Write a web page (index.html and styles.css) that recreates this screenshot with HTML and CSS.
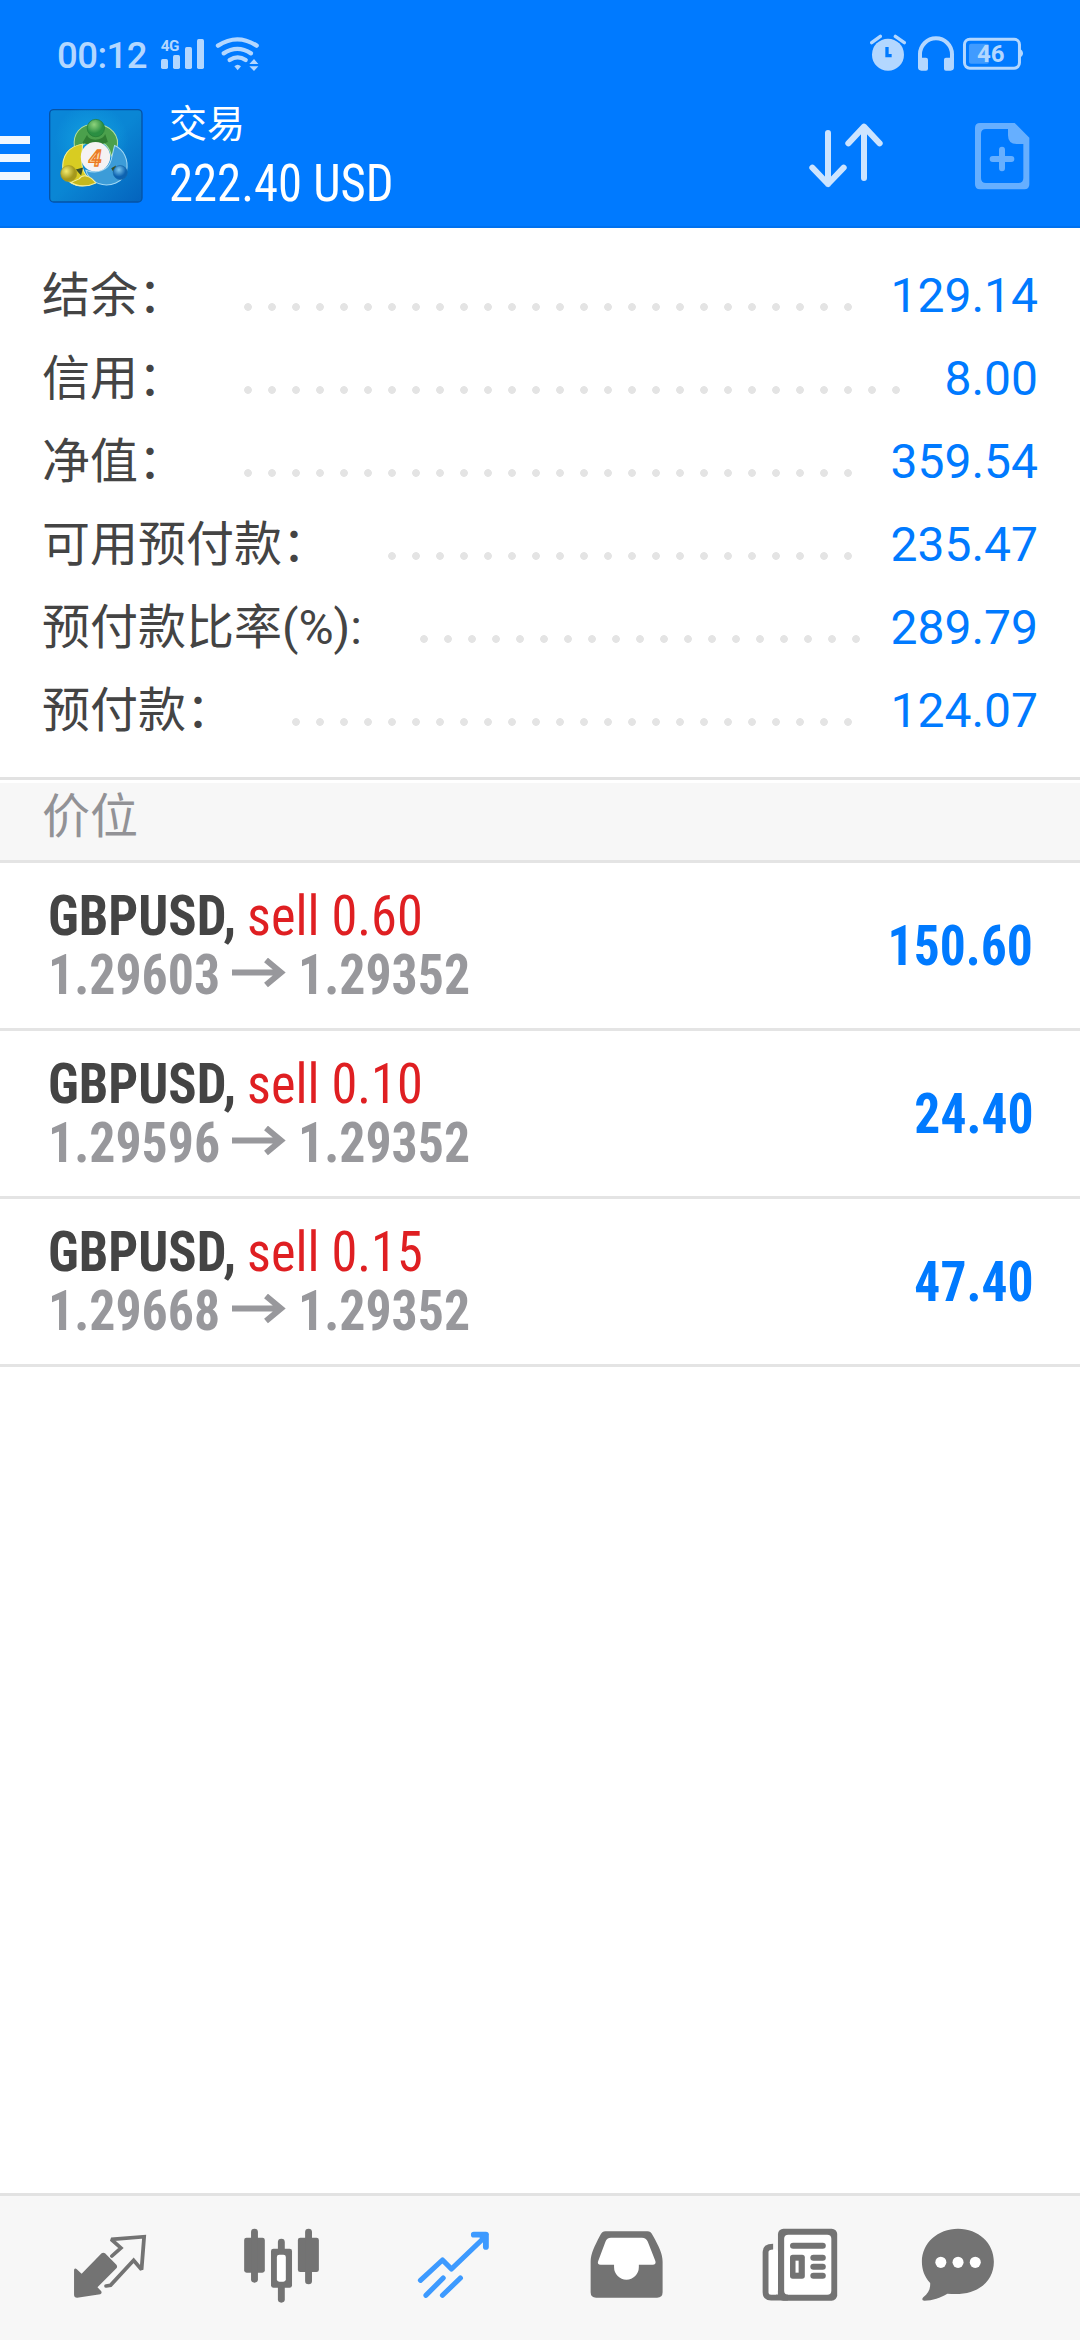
FILE: index.html
```html
<!DOCTYPE html>
<html lang="zh-CN">
<head>
<meta charset="utf-8">
<title>交易</title>
<link rel="stylesheet" href="styles.css">
</head>
<body>
<div class="app">
  <header class="top">
    <div class="status">
      <span class="clock">00:12</span>
      <svg class="signal" viewBox="480 105 300 120">
        <text class="net" x="482" y="154">4G</text>
        <rect x="483" y="177" width="21" height="30" rx="5"/>
        <rect x="519" y="165" width="21" height="42" rx="5"/>
        <rect x="555" y="141" width="21" height="66" rx="5"/>
        <rect x="591" y="117" width="21" height="90" rx="5"/>
        <g class="line">
          <path d="M654 137Q712 99 770 137" stroke-width="13"/>
          <path d="M671 160Q712 133 753 160" stroke-width="13"/>
          <path d="M689 180Q713 164 737 180" stroke-width="13"/>
        </g>
        <path d="M703 199Q713 190 723 199L713 211Z"/>
        <path d="M762 177L775 192H748ZM748 199H775L762 213Z"/>
      </svg>
      <svg class="sys" viewBox="270 100 460 120">
        <circle cx="324" cy="165" r="48"/>
        <g class="line"><path d="M275 129L301 110M346 110L373 129" stroke-width="10"/></g>
        <path class="hand" d="M321 142V168H335"/>
        <g class="line"><path d="M420 180V164A48 48 0 0 1 516 164V180" stroke-width="12"/></g>
        <path d="M414 174H438Q444 174 444 180V207Q444 213 438 213H424Q414 213 414 203ZM522 174H498Q492 174 492 180V207Q492 213 498 213H512Q522 213 522 203Z"/>
        <rect class="frame" x="553.500" y="118.500" width="165" height="87" rx="16"/>
        <rect class="charge" x="567" y="132" width="60" height="60" rx="6"/>
        <path d="M720 148Q729 152 729 161Q729 170 720 174Z"/>
        <text class="pct" x="591" y="188">46</text>
      </svg>
    </div>
    <div class="bar">
      <div class="menu"><i></i><i></i><i></i></div>
      <svg class="logo" viewBox="148 327 281 281">
        <defs>
          <linearGradient id="bg" x1="0" y1="0" x2="1" y2="1"><stop offset="0" stop-color="#0a86d8"/><stop offset=".5" stop-color="#0a86d4"/><stop offset="1" stop-color="#0463bd"/></linearGradient>
          <radialGradient id="glow"><stop offset="0" stop-color="#18b4e8"/><stop offset="1" stop-color="#18b4e8" stop-opacity="0"/></radialGradient>
          <radialGradient id="g" cx=".4" cy=".3"><stop offset="0" stop-color="#8fd37c"/><stop offset="1" stop-color="#2b8f42"/></radialGradient>
          <radialGradient id="y" cx=".35" cy=".35"><stop offset="0" stop-color="#f3ec70"/><stop offset="1" stop-color="#a5991c"/></radialGradient>
          <radialGradient id="b" cx=".4" cy=".3"><stop offset="0" stop-color="#7cc8f0"/><stop offset="1" stop-color="#0d62b0"/></radialGradient>
        </defs>
        <rect x="150" y="329" width="276" height="276" rx="12" fill="url(#bg)" stroke="#0553a6" stroke-width="4"/>
        <circle cx="275" cy="420" r="110" fill="url(#glow)" opacity=".6"/>
        <g stroke-width="3">
          <path d="M224 442C218 400 242 372 286 372C334 374 362 408 350 446L334 468C330 440 310 422 286 422C260 422 240 440 232 454Z" fill="#4ba04c" stroke="#b5e0a2"/>
          <path d="M248 432C208 438 184 466 190 512C196 546 228 562 262 556L284 546C262 536 246 512 246 486Z" fill="#d8cc22" stroke="#f4f0a0"/>
          <path d="M344 436C372 448 386 478 380 512C372 546 330 562 296 550C276 542 262 528 258 510C292 524 326 510 334 478Z" fill="#3c9cd8" stroke="#a3d9f4"/>
          <path d="M238 536C250 520 272 526 288 548C264 560 232 560 214 546Z" fill="#c5b81d" stroke="#f1eda0"/>
        </g>
        <path d="M262 404C266 424 308 424 316 402L324 426L286 440L248 428Z" fill="#2f7d33"/>
        <path d="M228 508L250 502L244 526ZM334 504L348 496L344 522Z" fill="#37502a"/>
        <circle cx="288" cy="384" r="26" fill="url(#g)" stroke="#1f7a35" stroke-width="2"/>
        <circle cx="207" cy="520" r="24" fill="url(#y)" stroke="#a89b20" stroke-width="2"/>
        <circle cx="361" cy="517" r="21" fill="url(#b)" stroke="#1768aa" stroke-width="2"/>
        <circle cx="287" cy="470" r="44" fill="#f5f2f3"/>
        <text class="four" x="286" y="496">4</text>
      </svg>
      <div class="titles">
        <h1>交易</h1>
        <div class="total cond">222.40 USD</div>
      </div>
      <svg class="sort" viewBox="84 366 228 204">
        <path d="M144 399V552M97 503L144 552L191 503M252 534V380M205 430L252 380L299 430"/>
      </svg>
      <svg class="neworder" viewBox="582 366 168 204">
        <path class="sheet" fill-rule="evenodd" d="M600 369H704L748 413V553Q748 568 733 568H600Q585 568 585 553V384Q585 369 600 369ZM618 387Q603 387 603 402V534Q603 549 618 549H715Q730 549 730 534V432H710Q684 432 684 406V387Z"/>
        <path class="plus" d="M666 449V505M638 477H694"/>
      </svg>
    </div>
  </header>

  <section class="summary">
    <div class="item"><span class="name">结余：</span><span class="dots"></span><span class="num">129.14</span></div>
    <div class="item"><span class="name">信用：</span><span class="dots"></span><span class="num">8.00</span></div>
    <div class="item"><span class="name">净值：</span><span class="dots"></span><span class="num">359.54</span></div>
    <div class="item"><span class="name">可用预付款：</span><span class="dots"></span><span class="num">235.47</span></div>
    <div class="item"><span class="name">预付款比率(%):</span><span class="dots"></span><span class="num">289.79</span></div>
    <div class="item"><span class="name">预付款：</span><span class="dots"></span><span class="num">124.07</span></div>
  </section>

  <h2 class="heading">价位</h2>

  <section class="positions">
    <div class="pos">
      <div class="info">
        <div class="deal"><b class="cond sym">GBPUSD,</b><span class="cond side">sell 0.60</span></div>
        <div class="prices"><b class="cond">1.29603</b><svg class="arrow" viewBox="0 0 54 30"><path d="M0 14.500H46M34 2L49 14.500L34 27"/></svg><b class="cond">1.29352</b></div>
      </div>
      <b class="cond profit">150.60</b>
    </div>
    <div class="pos">
      <div class="info">
        <div class="deal"><b class="cond sym">GBPUSD,</b><span class="cond side">sell 0.10</span></div>
        <div class="prices"><b class="cond">1.29596</b><svg class="arrow" viewBox="0 0 54 30"><path d="M0 14.500H46M34 2L49 14.500L34 27"/></svg><b class="cond">1.29352</b></div>
      </div>
      <b class="cond profit">24.40</b>
    </div>
    <div class="pos">
      <div class="info">
        <div class="deal"><b class="cond sym">GBPUSD,</b><span class="cond side">sell 0.15</span></div>
        <div class="prices"><b class="cond">1.29668</b><svg class="arrow" viewBox="0 0 54 30"><path d="M0 14.500H46M34 2L49 14.500L34 27"/></svg><b class="cond">1.29352</b></div>
      </div>
      <b class="cond profit">47.40</b>
    </div>
  </section>

  <nav class="tabs">
    <svg viewBox="174.200 100 290.400 300" preserveAspectRatio="none">
      <path d="M295 221Q300 217 305 221L338 255Q342 261 338 266L283 323L294 335Q297 341 291 344L224 354Q215 354 215 345V270Q218 264 223 269L237 282Z"/>
      <path class="o sharp" stroke-width="11" d="M325 229L351 205L323 179L418.500 171L411 270L388 242L321 317L308 319"/>
    </svg>
    <svg viewBox="673.700 100 290.400 300" preserveAspectRatio="none">
      <rect x="709" y="174" width="60" height="105" rx="7"/><rect x="729" y="147" width="20" height="162" rx="10"/>
      <rect x="865" y="174" width="61" height="103" rx="7"/><rect x="886" y="147" width="20" height="167" rx="10"/>
      <rect x="807" y="177" width="20" height="192" rx="10"/><rect x="787" y="207" width="61" height="117" rx="7"/>
      <rect x="804" y="225" width="26" height="81" rx="7" fill="#fff"/>
    </svg>
    <svg viewBox="1173.200 100 290.400 300" preserveAspectRatio="none">
      <path class="o active" stroke-width="15" d="M1221 302L1285 241L1311 268L1408 172M1237 347L1287 295M1285 347L1337 295"/>
      <path class="o active" stroke-width="17" d="M1376 165H1411V202M1402 174L1411 165"/>
    </svg>
    <svg viewBox="104.500 100 290.400 300" preserveAspectRatio="none">
      <path d="M190 155H312Q322 155 328 168C345 200 356 222 356 246V338Q356 354 340 354H163Q147 354 147 338V246C147 222 158 200 174 168Q180 155 190 155Z"/>
      <path fill="#fff" d="M206 174H296Q308 174 313 186L335 244Q338 255 327 255H287V262A36 38 0 0 1 215 262V255H176Q165 255 169 244L190 186Q194 174 206 174Z"/>
    </svg>
    <svg viewBox="604 100 290.400 300" preserveAspectRatio="none">
      <rect x="691" y="147" width="172" height="216" rx="16"/><rect x="709" y="165" width="137" height="180" rx="12" fill="#fff"/>
      <rect x="663" y="209" width="28" height="136" rx="8" fill="#fff"/>
      <path class="o flat" stroke-width="17" d="M677 201Q655 201 655 217V338Q655 354 671 354H720"/>
      <path d="M689 354V330Q691 345 684 347Z"/>
      <rect x="726" y="189" width="104" height="18" rx="9"/><rect x="726" y="225" width="43" height="72" rx="8"/><rect x="742" y="243" width="9" height="36" fill="#fff"/>
      <rect x="785" y="225" width="45" height="18" rx="9"/><rect x="785" y="252" width="45" height="18" rx="9"/><rect x="785" y="279" width="45" height="18" rx="9"/>
    </svg>
    <svg viewBox="1103.500 100 290.400 300" preserveAspectRatio="none">
      <path d="M1214 147C1273 147 1318 190 1318 246C1318 305 1270 352 1183 342C1163 354 1140 363 1116 363Q1106 361 1113 353C1128 341 1134 328 1133 310C1117 292 1109 270 1109 246C1109 190 1155 147 1214 147Z"/>
      <g fill="#fff"><ellipse cx="1164" cy="248" rx="16" ry="17"/><ellipse cx="1214" cy="248" rx="16" ry="17"/><ellipse cx="1264" cy="248" rx="16" ry="17"/></g>
    </svg>
  </nav>
</div>
</body>
</html>
```
FILE: styles.css
```css
* { box-sizing: border-box; }
body { margin: 0; background: #fff; font-family: Roboto, "Noto Sans CJK SC", sans-serif; color: #444; }
svg { display: block; flex: none; }
h1, h2 { margin: 0; font-weight: 400; }

.app { width: 1080px; height: 2340px; display: flex; flex-direction: column; overflow: hidden; }

.top { height: 228px; background: #007aff; border-bottom: 2px solid #0071ee; }
.status { height: 100px; display: flex; align-items: flex-start; padding: 35px 0 0 57px; color: #b3d7ff; fill: #b3d7ff; }
.clock { width: 103px; font-size: 36.500px; font-weight: 500; line-height: 41px; letter-spacing: -.5px; }
.signal { width: 100px; height: 40px; }
.sys { width: 153.300px; height: 40px; margin: -2px 0 0 610px; }
.status .line { fill: none; stroke: #b3d7ff; stroke-linecap: round; }
.net { font: 700 46px Roboto, sans-serif; letter-spacing: -1px; }
.pct { font: 700 72px Roboto, sans-serif; }
.hand { fill: none; stroke: #007aff; stroke-width: 10; }
.frame { fill: none; stroke: #b3d7ff; stroke-width: 9; }
.charge { fill: #409bff; }

.bar { display: flex; align-items: flex-start; }
.menu { width: 30px; padding-top: 36px; display: grid; gap: 10px; }
.menu i { height: 8px; background: #f0f7ff; }
.logo { width: 94px; height: 94px; margin: 9px 0 0 19px; }
.four { font: italic 700 68px Roboto, sans-serif; fill: #fbd9a0; stroke: #ec7a24; stroke-width: 4; text-anchor: middle; }
.titles { width: 639px; padding-left: 26px; color: #fff; }
h1 { font-size: 38px; line-height: 48px; }
.total { padding-top: 6px; font-size: 51px; line-height: 60px; transform: scaleX(.955); }

.sort { width: 76px; height: 68px; margin-top: 22px; margin-left: 26px; fill: none; stroke: #cce4ff; stroke-width: 18; stroke-linecap: round; stroke-linejoin: round; }
.neworder { width: 56px; height: 68px; margin: 22px 0 0 90px; }
.sheet { fill: #66afff; }
.plus { stroke: #66afff; stroke-width: 18; stroke-linecap: round; }

.cond { display: inline-block; font-family: "Roboto Condensed", Roboto, sans-serif; font-stretch: 75%; white-space: pre; transform-origin: left center; }

.summary { height: 552px; padding: 26px 42px 0; border-bottom: 3px solid #e2e2e2; }
.item { height: 83px; display: flex; align-items: center; font-size: 48px; line-height: 83px; }
.dots { flex: 1; height: 8px; margin: 23px 28px 0 58px; background: radial-gradient(circle at 4px 4px, #e4e4e4 3.500px, transparent 4.200px) 0 0 / 24px 8px repeat-x; }
.num { color: #007aff; }

.heading { height: 83px; padding-left: 42px; border-top: 3px solid #fff; border-bottom: 3px solid #e4e4e4; background: #f7f7f7; color: #929296; font-size: 48px; line-height: 68px; }

.pos { height: 168px; display: flex; justify-content: space-between; align-items: center; padding: 0 48px; border-bottom: 3px solid #e4e4e4; font-size: 56px; line-height: 59px; }
.deal, .prices { display: flex; height: 59px; }
.sym { width: 187px; transform: scaleX(.94); }
.side { margin-left: 12px; color: #df1f22; transform: scaleX(.935); }
.prices { color: #98989c; }
.prices b { width: 172px; transform: scaleX(.925); }
.arrow { width: 54px; height: 30px; margin: 12px 12px 0 12px; fill: none; stroke: #98989c; stroke-width: 6; }
.pos .profit { margin-right: -1px; padding-top: 2px; color: #007aff; transform: scaleX(.92); transform-origin: right center; }

.tabs { height: 147px; margin-top: auto; border-top: 3px solid #e2e2e2; background: #f7f7f7; display: flex; gap: 72px; padding: 17px 0 0 60px; }
.tabs svg { width: 100px; height: 100px; fill: #737373; }
.tabs .o { fill: none; stroke: #737373; stroke-linecap: round; stroke-linejoin: round; }
.tabs .sharp { stroke-linejoin: miter; stroke-miterlimit: 2; }
.tabs .flat { stroke-linecap: butt; }
.tabs .active { stroke: #3d9aff; }
```
